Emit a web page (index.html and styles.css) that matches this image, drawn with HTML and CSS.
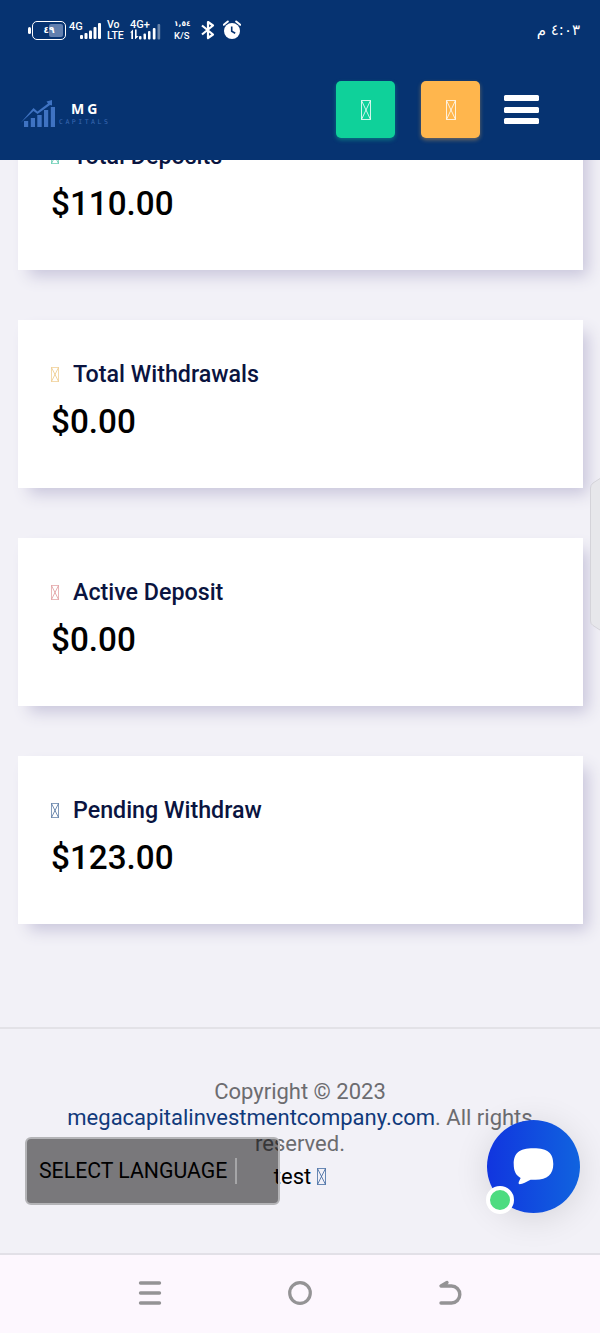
FILE: index.html
```html
<!DOCTYPE html>
<html lang="en">
<head>
<meta charset="utf-8">
<title>MG Capitals</title>
<link rel="stylesheet" href="styles.css">
</head>
<body>
<svg class="defs" width="0" height="0">
  <symbol id="box" viewBox="0 0 10 20" preserveAspectRatio="none"><path d="M.5.5h9v19h-9zM.5.5l9 19M9.5.5l-9 19" fill="none" stroke="currentColor" stroke-width=".8" vector-effect="non-scaling-stroke"/></symbol>
</svg>
<div class="screen">
  <header class="top">
    <div class="status">
      <div class="battery"><span class="battery-tip"></span><span class="battery-body"><span class="battery-level"></span><span class="battery-text">٤٩</span></span></div>
      <div class="net"><span class="net-label">4G</span>
        <svg class="bars" width="21" height="16" viewBox="0 0 21 16" fill="#fff"><rect y="12" width="3" height="4" rx="1"/><rect x="4.5" y="10" width="3" height="6" rx="1"/><rect x="9" y="7.500" width="3" height="8.500" rx="1"/><rect x="13.500" y="4" width="3" height="12" rx="1"/><rect x="18" width="3" height="16" rx="1"/></svg>
      </div>
      <div class="stack volte"><span>Vo</span><span>LTE</span></div>
      <div class="stack second"><span>4G+</span>
        <svg width="31" height="16" viewBox="0 0 31 16" fill="#fff"><path d="M0 8.500 3 5.500V15H1.300V8.500zM5 5.500h1.600v6.500l2 .2L5.500 15H5z"/><rect x="9" y="12" width="2.500" height="3.500" rx="1"/><rect x="13.500" y="9.500" width="2.500" height="6" rx="1"/><rect x="18" y="7" width="2.500" height="8.500" rx="1"/><rect x="22.800" y="4" width="2.700" height="11.500" rx="1"/><rect x="27.500" width="2.700" height="15.500" rx="1" opacity=".4"/></svg>
      </div>
      <div class="stack speed"><span class="arabic-small">١,٥٤</span><span>K/S</span></div>
      <svg class="bluetooth" width="16" height="20" viewBox="0 0 16 20" fill="none" stroke="#fff" stroke-width="2.200" stroke-linejoin="round"><path d="M2 5.500 13 14.500 8 18V2l5 3.500L2 14.500"/></svg>
      <svg class="alarm" width="18" height="20" viewBox="0 0 18 20"><circle cx="9" cy="11" r="8" fill="#fff"/><path d="M.8 4.800 4.800 1.500M17.200 4.800l-4-3.300" stroke="#fff" stroke-width="2" stroke-linecap="round"/><path d="M8.700 6.500V11.200l3.500 2" fill="none" stroke="#063371" stroke-width="1.600"/></svg>
      <div class="clock" dir="rtl">٤:٠٣ م</div>
    </div>
    <div class="bar">
      <div class="logo">
        <svg width="36" height="30" viewBox="0 0 36 30" fill="#3f73c2"><path d="M4 22h4.200v6H4zM10.800 19H15v9h-4.200zM17.300 16h4.400v12h-4.400zM24 11h4.200v17H24zM30.800 8H35v20h-4.200z"/><path d="M.5 24 13.500 9l4 3.500L28 4.500 26.500 2.500 32 1v5.500l-2-.5L17.500 15l-4-3z"/></svg>
        <div class="brand"><span class="brand-name">MG</span><span class="brand-sub">CAPITALS</span></div>
      </div>
      <button class="action green"><svg width="10" height="20"><use href="#box"/></svg></button>
      <button class="action orange"><svg width="10" height="20"><use href="#box"/></svg></button>
      <div class="menu"><span></span><span></span><span></span></div>
    </div>
  </header>

  <main class="cards">
    <section class="card"><h2><svg class="mark teal" width="8" height="15"><use href="#box"/></svg>Total Deposits</h2><p>$110.00</p></section>
    <section class="card"><h2><svg class="mark gold" width="8" height="15"><use href="#box"/></svg>Total Withdrawals</h2><p>$0.00</p></section>
    <section class="card"><h2><svg class="mark red" width="8" height="15"><use href="#box"/></svg>Active Deposit</h2><p>$0.00</p></section>
    <section class="card"><h2><svg class="mark navy" width="8" height="15"><use href="#box"/></svg>Pending Withdraw</h2><p>$123.00</p></section>
  </main>

  <footer class="footer">
    <div class="copy">Copyright © 2023<br><a>megacapitalinvestmentcompany.com</a>. All rights<br>reserved.</div>
    <div class="test">test <svg width="9" height="17"><use href="#box"/></svg></div>
    <div class="language"><span>SELECT LANGUAGE</span></div>
    <div class="chat">
      <svg width="93" height="93" viewBox="0 0 94 94"><path d="M47 28.500C62 28.500 67 34 67 44.500S61 60.500 49 60.500H44C40 62.500 36 64.800 33 65Q31.500 65 32 63L34 58.500C29 56 27 51.500 27 44.500 27 34 32 28.500 47 28.500z" fill="#fff"/></svg>
      <span class="online"></span>
    </div>
  </footer>

  <nav class="nav">
    <svg width="24" height="26" viewBox="0 0 24 26" fill="none" stroke="#949395" stroke-width="3.400" stroke-linecap="round"><path d="M2.500 3h19M2.500 13h19M2.500 23h19"/></svg>
    <svg width="26" height="26" viewBox="0 0 26 26" fill="none" stroke="#949395" stroke-width="3.200"><circle cx="13" cy="13" r="10.300"/></svg>
    <svg width="24" height="26" viewBox="0 0 24 26" fill="none" stroke="#949395" stroke-width="3.400" stroke-linecap="round" stroke-linejoin="round"><path d="M9 2.500 3 6h10.500a8.300 8.500 0 0 1 0 17H3"/></svg>
  </nav>
  <div class="edge"><svg width="10" height="153" viewBox="0 0 10 153"><path d="M10 .5 3 5Q.5 7 .5 10V143q0 3 2.500 4.500l7 4.500" fill="#e7e7eb" stroke="#d4d3d9"/></svg></div>
</div>
</body>
</html>
```
FILE: styles.css
```css
* { box-sizing: border-box; }
body { margin: 0; font-family: Roboto, sans-serif; background: #f2f1f7; }
svg { display: block; flex: none; }
.defs { position: absolute; }
.screen { position: relative; width: 600px; height: 1333px; overflow: hidden; display: flex; flex-direction: column; }

.top { position: relative; z-index: 2; height: 160px; flex: none; background: #063371; color: #fff; }
.status { height: 60px; display: flex; align-items: center; padding: 0 20px 0 28px; font-weight: 500; }
.battery { display: flex; align-items: center; gap: 1px; width: 41px; }
.battery-tip { width: 3px; height: 7px; border-radius: 2px; background: #fff; }
.battery-body { position: relative; width: 34px; height: 19px; border: 1.500px solid #fff; border-radius: 5px; display: flex; justify-content: flex-end; padding: 2px; }
.battery-level { width: 14px; height: 13px; background: #617fae; border-radius: 2px; }
.battery-text { position: absolute; inset: 0; font: bold 9px/16px "DejaVu Sans", sans-serif; text-align: center; }
.net { width: 38px; height: 19px; display: flex; }
.net-label { width: 11px; flex: none; font-size: 11px; line-height: 11px; white-space: nowrap; }
.bars { margin-top: 2px; }
.stack { display: flex; flex-direction: column; font-size: 11px; line-height: 10px; white-space: nowrap; }
.volte { width: 23px; font-size: 10.500px; line-height: 10px; }
.volte span + span { padding-top: 1px; }
.second { width: 44px; height: 20px; }
.second svg { margin-top: -6px; }
.speed { width: 26px; font-size: 9.500px; }
.speed span { line-height: 12px; }
.arabic-small { font: bold 7.500px "DejaVu Sans", sans-serif; }
.bluetooth { margin-right: 7px; }
.clock { margin-left: auto; font: 15px "DejaVu Sans", sans-serif; }

.bar { height: 100px; display: flex; padding: 21px 61px 0 20px; align-items: flex-start; }
.logo { display: flex; margin-top: 18px; margin-right: auto; }
.brand { display: flex; flex-direction: column; padding: 1px 0 0 3px; }
.brand-name { padding-left: 12px; font: bold 14px/18px "Noto Sans", sans-serif; letter-spacing: 3px; }
.brand-sub { font: 6.500px/8px "DejaVu Sans Mono", monospace; letter-spacing: 2.500px; color: #3a69b1; }
.action { width: 59px; height: 57px; border: 0; border-radius: 5px; padding: 0; color: #fff; display: flex; align-items: center; justify-content: center; }
.green { background: #0fd19a; box-shadow: 0 2px 4px #0fd19a66; margin-right: 26px; }
.orange { background: #ffb64d; box-shadow: 0 2px 4px #ffb64d66; margin-right: 24px; }
.menu { display: grid; gap: 5.500px; margin: 14px 0 0; width: 35px; }
.menu span { height: 6px; border-radius: 1.500px; background: #fff; }

.cards { display: flex; flex-direction: column; gap: 50px; margin: -58px 17px 0 18px; flex: none; }
.card { height: 168px; background: #fff; padding: 39px 33px; box-shadow: 8px 9px 15px -3px #c8c5db; }
.card h2 { margin: 0; display: flex; align-items: center; height: 30px; font-size: 23.250px; font-weight: 500; line-height: 30px; color: #0a1440; }
.mark { margin: 0 14px 0 0; }
.card p { margin: 11px 0 0; font-size: 33.250px; line-height: 44px; font-weight: 500; color: #000; }
.teal { color: #59c8ac; }
.gold { color: #edc989; }
.red { color: #e09a9d; }
.navy { color: #52749f; }

.footer { position: relative; height: 228px; flex: none; margin-top: 103px; border-top: 2px solid #e3e2e7; border-bottom: 2px solid #e2e0e7; padding-top: 50px; text-align: center; }
.copy { font-size: 22px; line-height: 26px; color: #6c6c70; }
.copy a { color: #113a7b; }
.test { display: flex; align-items: center; justify-content: center; gap: 6px; margin-top: 7px; font-size: 22px; line-height: 26px; color: #000; }
.test svg { color: #39639d; margin-top: -2px; }
.language { position: absolute; left: 25px; top: 108px; width: 255px; height: 68px; background: rgba(0,0,0,.5); border: 2px solid #b4b4b7; border-radius: 6px; padding: 19px 0 0 12px; display: flex; color: #000; }
.language span { height: 26px; padding-right: 8px; border-right: 2px solid #a6a6a8; font-size: 21.250px; line-height: 26px; white-space: nowrap; }
.chat { position: absolute; left: 487px; top: 91px; width: 93px; height: 93px; border-radius: 50%; background: linear-gradient(90deg, #1135df, #1063df); box-shadow: 0 5px 35px rgba(0,0,0,.12); }
.online { position: absolute; left: -1px; top: 66px; width: 28px; height: 28px; border: 4px solid #fff; border-radius: 50%; background: #4ddc80; }
.nav { position: relative; flex: 1; background: #fdf7fe; display: flex; justify-content: space-between; padding: 25px 138px 0; }
.edge { position: absolute; right: 0; top: 478px; }
```
